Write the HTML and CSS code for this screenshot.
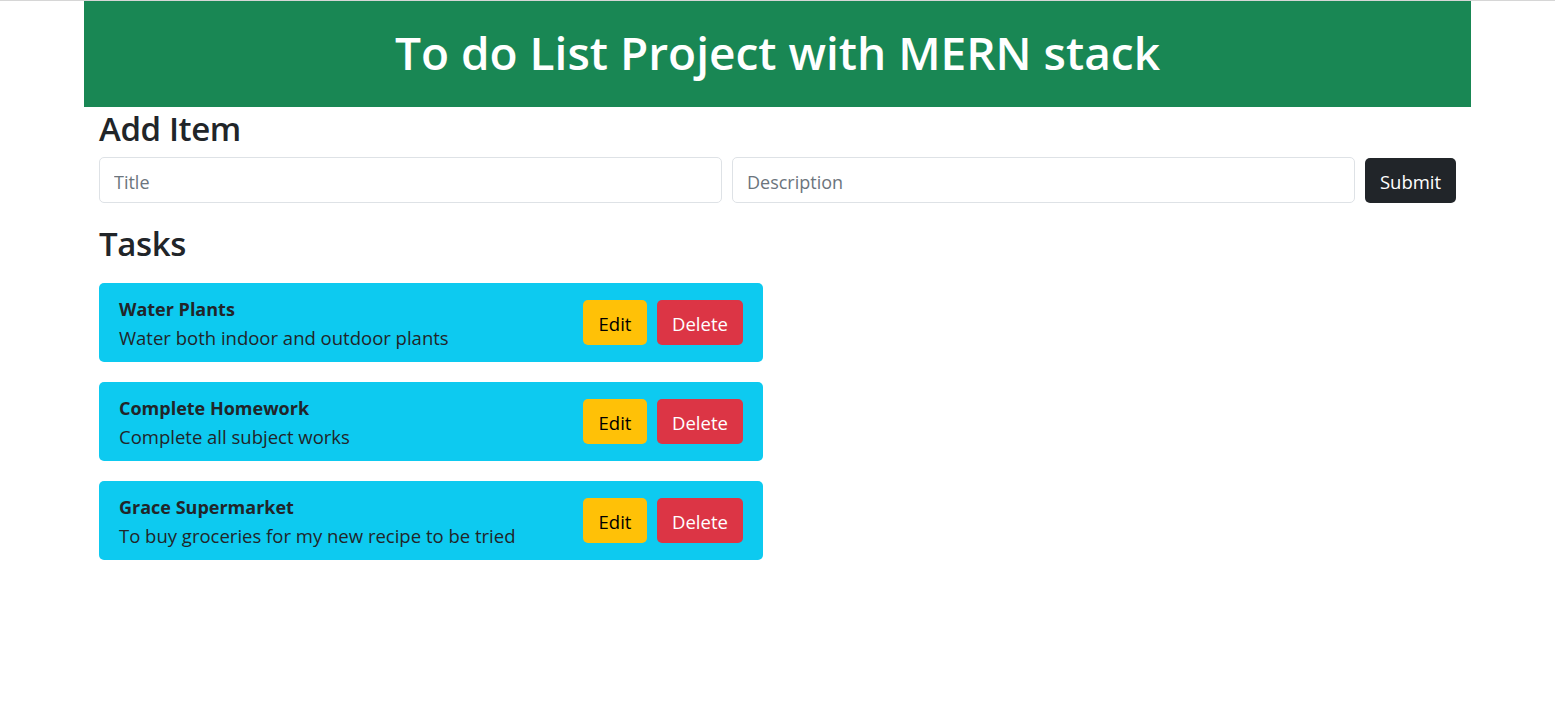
FILE: index.html
```html
<!DOCTYPE html>
<html lang="en">
<head>
<meta charset="utf-8">
<title>To do List Project with MERN stack</title>
<link rel="stylesheet" href="styles.css">
</head>
<body>
<div class="page">
  <header class="banner">
    <h1 class="banner-title">To do List Project with MERN stack</h1>
  </header>
  <main class="content">
    <h2 class="section-title">Add Item</h2>
    <form class="add-form">
      <input class="field" type="text" placeholder="Title">
      <input class="field" type="text" placeholder="Description">
      <button class="btn btn-dark" type="button">Submit</button>
    </form>
    <h2 class="section-title tasks-title">Tasks</h2>
    <ul class="task-list">
      <li class="task">
        <div class="task-text">
          <div class="task-name">Water Plants</div>
          <div class="task-desc">Water both indoor and outdoor plants</div>
        </div>
        <div class="task-actions">
          <button class="btn btn-warning" type="button">Edit</button>
          <button class="btn btn-danger" type="button">Delete</button>
        </div>
      </li>
      <li class="task">
        <div class="task-text">
          <div class="task-name">Complete Homework</div>
          <div class="task-desc">Complete all subject works</div>
        </div>
        <div class="task-actions">
          <button class="btn btn-warning" type="button">Edit</button>
          <button class="btn btn-danger" type="button">Delete</button>
        </div>
      </li>
      <li class="task">
        <div class="task-text">
          <div class="task-name">Grace Supermarket</div>
          <div class="task-desc">To buy groceries for my new recipe to be tried</div>
        </div>
        <div class="task-actions">
          <button class="btn btn-warning" type="button">Edit</button>
          <button class="btn btn-danger" type="button">Delete</button>
        </div>
      </li>
    </ul>
  </main>
</div>
</body>
</html>
```

FILE: styles.css
```css
* { box-sizing: border-box; }
html, body { margin: 0; padding: 0; }
body {
  font-family: "Open Sans", "Noto Sans", sans-serif;
  font-size: 18px;
  line-height: 1.5;
  color: #212529;
  background: #fff;
  border-top: 1px solid #d6d6d6;
}
.page {
  width: 1387px;
  margin: 0 auto;
}
.banner {
  background: #198754;
  padding: 24px 0 28px;
  text-align: center;
}
.banner-title {
  margin: 0;
  color: #fff;
  font-size: 46px;
  font-weight: 600;
  line-height: 54px;
}
.content {
  padding: 0 15px;
}
.section-title {
  margin: 0;
  font-size: 33px;
  font-weight: 600;
  line-height: 43px;
  letter-spacing: -0.4px;
}
.add-form {
  display: flex;
  gap: 10px;
  margin-top: 7px;
}
.field {
  flex: 1 1 0;
  min-width: 0;
  height: 46px;
  padding: 10px 14px 6px;
  font-family: inherit;
  font-size: 18px;
  color: #212529;
  border: 1px solid #dee2e6;
  border-radius: 5px;
  background: #fff;
}
.field::placeholder { color: #6c757d; }
.btn {
  height: 45px;
  padding: 3px 12px 0;
  font-family: inherit;
  font-size: 18.5px;
  line-height: 1;
  border: 1px solid transparent;
  border-radius: 5px;
  cursor: pointer;
}
.btn-dark { background: #212529; color: #fff; width: 91px; margin-top: 1px; }
.btn-warning { background: #ffc107; color: #000; width: 64px; }
.btn-danger { background: #dc3545; color: #fff; width: 86px; }
.tasks-title { margin-top: 19px; }
.task-list {
  list-style: none;
  margin: 18px 0 0;
  padding: 0;
  width: 664px;
  display: flex;
  flex-direction: column;
  gap: 20px;
}
.task {
  display: flex;
  align-items: center;
  justify-content: space-between;
  background: #0dcaf0;
  border-radius: 5px;
  padding: 12px 20px 9px;
}
.task-name { font-weight: 700; line-height: 28px; }
.task-desc { font-size: 18.5px; line-height: 30px; }
.task-actions { display: flex; gap: 10px; margin-top: -3px; }
```
